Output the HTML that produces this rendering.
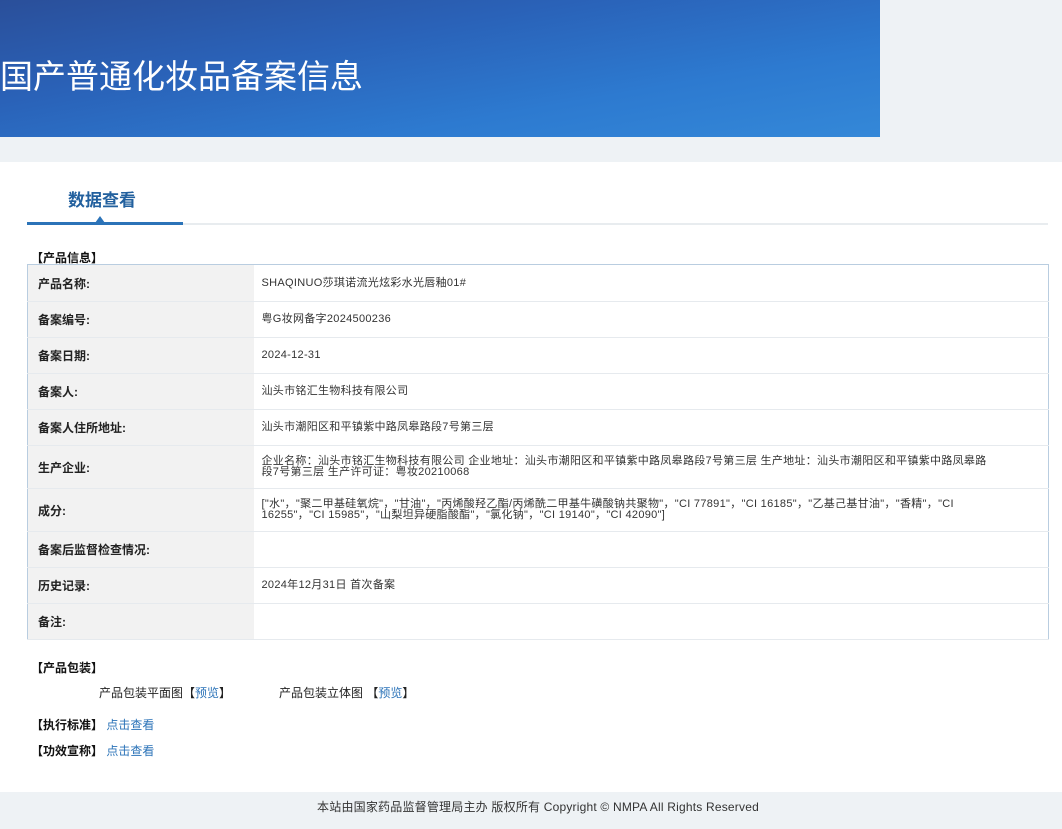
<!DOCTYPE html>
<html><head><meta charset="utf-8"><style>
*{margin:0;padding:0;box-sizing:border-box}
body{width:1062px;height:829px;background:#fff;font-family:"Liberation Sans","Noto Sans CJK SC",sans-serif;position:relative;overflow:hidden;color:#222}
.topbg{position:absolute;left:0;top:0;width:1062px;height:162px;background:#eef2f5}
.banner{position:absolute;left:0;top:0;width:880px;height:137px;background:linear-gradient(170deg,#2a4f9a 0%,#2a62b8 35%,#2d7ad0 70%,#3488d8 100%)}
.banner h1{position:absolute;left:0;top:50px;font-size:33px;color:#fff;font-weight:normal}
.tab{position:absolute;left:68px;top:186px;font-size:17px;font-weight:bold;color:#22609e}
.line{position:absolute;left:183px;top:223px;width:865px;height:2px;background:#e8ecef}
.bline{position:absolute;left:27px;top:222px;width:156px;height:3px;background:#2b73b8}
.tri{position:absolute;left:95px;top:216px;width:0;height:0;border-left:5px solid transparent;border-right:5px solid transparent;border-bottom:7px solid #2b73b8}
.sec{position:absolute;font-size:12px;font-weight:bold;color:#111}
table{position:absolute;left:27px;top:264px;width:1022px;border-collapse:collapse;border:1px solid #b9cde0}
td{border-bottom:1px solid #e6eaee;font-size:11px;color:#333;vertical-align:middle}
td.l{width:226px;background:#f2f2f2;font-size:12px;font-weight:bold;color:#222;padding-left:10px}
td.v{padding:0 52px 0 8px;line-height:11px;letter-spacing:0.3px}
a{color:#2b73b8;text-decoration:none}
.t{position:absolute;font-size:12px;color:#222}
.footer{position:absolute;left:0;top:792px;width:1062px;height:37px;background:#eef2f5;font-size:12px;color:#333;text-align:center;line-height:30px;padding-left:14px;letter-spacing:0.2px}
</style></head><body>
<div class="topbg"></div>
<div class="banner"><h1>国产普通化妆品备案信息</h1></div>
<div class="tab">数据查看</div>
<div class="line"></div><div class="bline"></div><div class="tri"></div>
<div class="sec" style="left:31px;top:249px">【产品信息】</div>
<table>
<tr style="height:37px"><td class="l">产品名称:</td><td class="v">SHAQINUO莎琪诺流光炫彩水光唇釉01#</td></tr>
<tr style="height:36px"><td class="l">备案编号:</td><td class="v">粤G妆网备字2024500236</td></tr>
<tr style="height:36px"><td class="l">备案日期:</td><td class="v">2024-12-31</td></tr>
<tr style="height:36px"><td class="l">备案人:</td><td class="v">汕头市铭汇生物科技有限公司</td></tr>
<tr style="height:36px"><td class="l">备案人住所地址:</td><td class="v">汕头市潮阳区和平镇紫中路凤皋路段7号第三层</td></tr>
<tr style="height:43px"><td class="l">生产企业:</td><td class="v">企业名称：汕头市铭汇生物科技有限公司 企业地址：汕头市潮阳区和平镇紫中路凤皋路段7号第三层 生产地址：汕头市潮阳区和平镇紫中路凤皋路段7号第三层 生产许可证：粤妆20210068</td></tr>
<tr style="height:43px"><td class="l">成分:</td><td class="v">["水"，"聚二甲基硅氧烷"，"甘油"，"丙烯酸羟乙酯/丙烯酰二甲基牛磺酸钠共聚物"，"CI 77891"，"CI 16185"，"乙基己基甘油"，"香精"，"CI 16255"，"CI 15985"，"山梨坦异硬脂酸酯"，"氯化钠"，"CI 19140"，"CI 42090"]</td></tr>
<tr style="height:36px"><td class="l">备案后监督检查情况:</td><td class="v"></td></tr>
<tr style="height:36px"><td class="l">历史记录:</td><td class="v">2024年12月31日 首次备案</td></tr>
<tr style="height:36px"><td class="l">备注:</td><td class="v"></td></tr>
</table>
<div class="sec" style="left:31px;top:659px">【产品包装】</div>
<div class="t" style="left:99px;top:684px">产品包装平面图【<a>预览</a>】</div>
<div class="t" style="left:279px;top:684px">产品包装立体图 【<a>预览</a>】</div>
<div class="sec" style="left:31px;top:716px">【执行标准】 <a style="font-weight:normal">点击查看</a></div>
<div class="sec" style="left:31px;top:742px">【功效宣称】 <a style="font-weight:normal">点击查看</a></div>
<div class="footer">本站由国家药品监督管理局主办 版权所有 Copyright © NMPA All Rights Reserved</div>
</body></html>
